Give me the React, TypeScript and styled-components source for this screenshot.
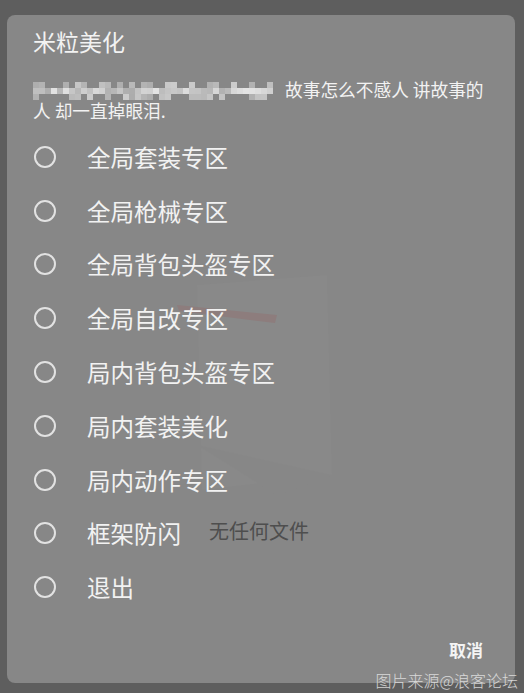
import React from "react";
import styled, { createGlobalStyle } from "styled-components";

const Global = createGlobalStyle`
  html, body { margin: 0; padding: 0; background: #5e5e5e; }
  body { font-family: "Noto Sans CJK SC", "Noto Sans", Roboto, sans-serif; width: 524px; height: 693px; overflow: hidden; }
`;

const Screen = styled.div`
  position: relative;
  width: 524px;
  height: 693px;
  padding: 15px 9px 10px 7px;
  box-sizing: border-box;
`;

const Panel = styled.div`
  position: relative;
  height: 100%;
  background: #878787;
  border-radius: 8px;
  display: flex;
  flex-direction: column;
  padding: 0 32px 21px 26px;
  box-sizing: border-box;
  overflow: hidden;
`;

const Title = styled.div`
  color: #f2f2f2;
  font-size: 23px;
  line-height: 30px;
  margin-top: 11px;
  position: relative;
`;

const Message = styled.div`
  color: #f2f2f2;
  font-size: 17.7px;
  line-height: 21px;
  margin-top: 23px;
  position: relative;
  white-space: nowrap;
`;

const Mosaic = styled.svg`
  display: inline-block;
  vertical-align: -3px;
  margin-right: 12px;
`;

const List = styled.div`
  display: grid;
  grid-auto-rows: 53.8px;
  margin-top: 9px;
  position: relative;
`;

const Row = styled.div`
  display: flex;
  align-items: center;
  gap: 31px;
`;

const Radio = styled.span`
  width: 18px;
  height: 18px;
  border: 2px solid #e2e2e2;
  border-radius: 50%;
  margin-left: 1px;
  flex: none;
`;

const Label = styled.span`
  color: #f2f2f2;
  font-size: 23.5px;
  line-height: 30px;
`;

const Footer = styled.div`
  display: flex;
  justify-content: flex-end;
  margin-top: auto;
  position: relative;
`;

const Cancel = styled.span`
  color: #f4f4f4;
  font-size: 17px;
  font-weight: 700;
  line-height: 24px;
`;

const Behind = styled.div`
  position: absolute;
  left: 209px;
  top: 517px;
  color: #4e4e4e;
  font-size: 20px;
  line-height: 28px;
`;

const Ghost = styled.svg`
  position: absolute;
  left: 150px;
  top: 230px;
  opacity: 0.25;
`;

const Watermark = styled.div`
  position: absolute;
  right: 6px;
  bottom: 2px;
  color: #e6e6e6;
  opacity: 0.85;
  font-size: 16px;
  line-height: 22px;
  font-weight: 300;
`;

const items = [
  "全局套装专区",
  "全局枪械专区",
  "全局背包头盔专区",
  "全局自改专区",
  "局内背包头盔专区",
  "局内套装美化",
  "局内动作专区",
  "框架防闪",
  "退出",
];

function MosaicBlock() {
  const cells: JSX.Element[] = [];
  const cols = 40;
  const rows = 3;
  let seed = 7;
  const rnd = () => {
    seed = (seed * 9301 + 49297) % 233280;
    return seed / 233280;
  };
  for (let r = 0; r < rows; r++) {
    for (let c = 0; c < cols; c++) {
      const v = rnd();
      const base = r === 1 ? 170 : 145;
      const g = Math.round(base + v * 60);
      const show = r === 1 || v > 0.45;
      if (!show) continue;
      cells.push(
        <rect key={`${r}-${c}`} x={c * 6} y={r * 6} width={6} height={6} fill={`rgb(${g},${g},${g})`} />
      );
    }
  }
  return (
    <Mosaic width={240} height={18} viewBox="0 0 240 18">
      {cells}
    </Mosaic>
  );
}

export default function App() {
  return (
    <>
      <Global />
      <Screen>
        <Panel>
          <Ghost width={200} height={260} viewBox="0 0 200 260">
            <path d="M40 40 L170 30 L175 230 L45 245 Z" fill="#8f8f8f" />
            <path d="M20 60 L120 70 L118 78 L22 66 Z" fill="#a06060" />
            <path d="M40 200 L175 230 L120 250 Z" fill="#8a8a8a" />
          </Ghost>
          <Title>米粒美化</Title>
          <Message>
            <MosaicBlock />故事怎么不感人 讲故事的
            <br />人 却一直掉眼泪.
          </Message>
          <List>
            {items.map((t) => (
              <Row key={t}>
                <Radio />
                <Label>{t}</Label>
              </Row>
            ))}
          </List>
          <Footer>
            <Cancel>取消</Cancel>
          </Footer>
        </Panel>
        <Behind>无任何文件</Behind>
        <Watermark>图片来源@浪客论坛</Watermark>
      </Screen>
    </>
  );
}
